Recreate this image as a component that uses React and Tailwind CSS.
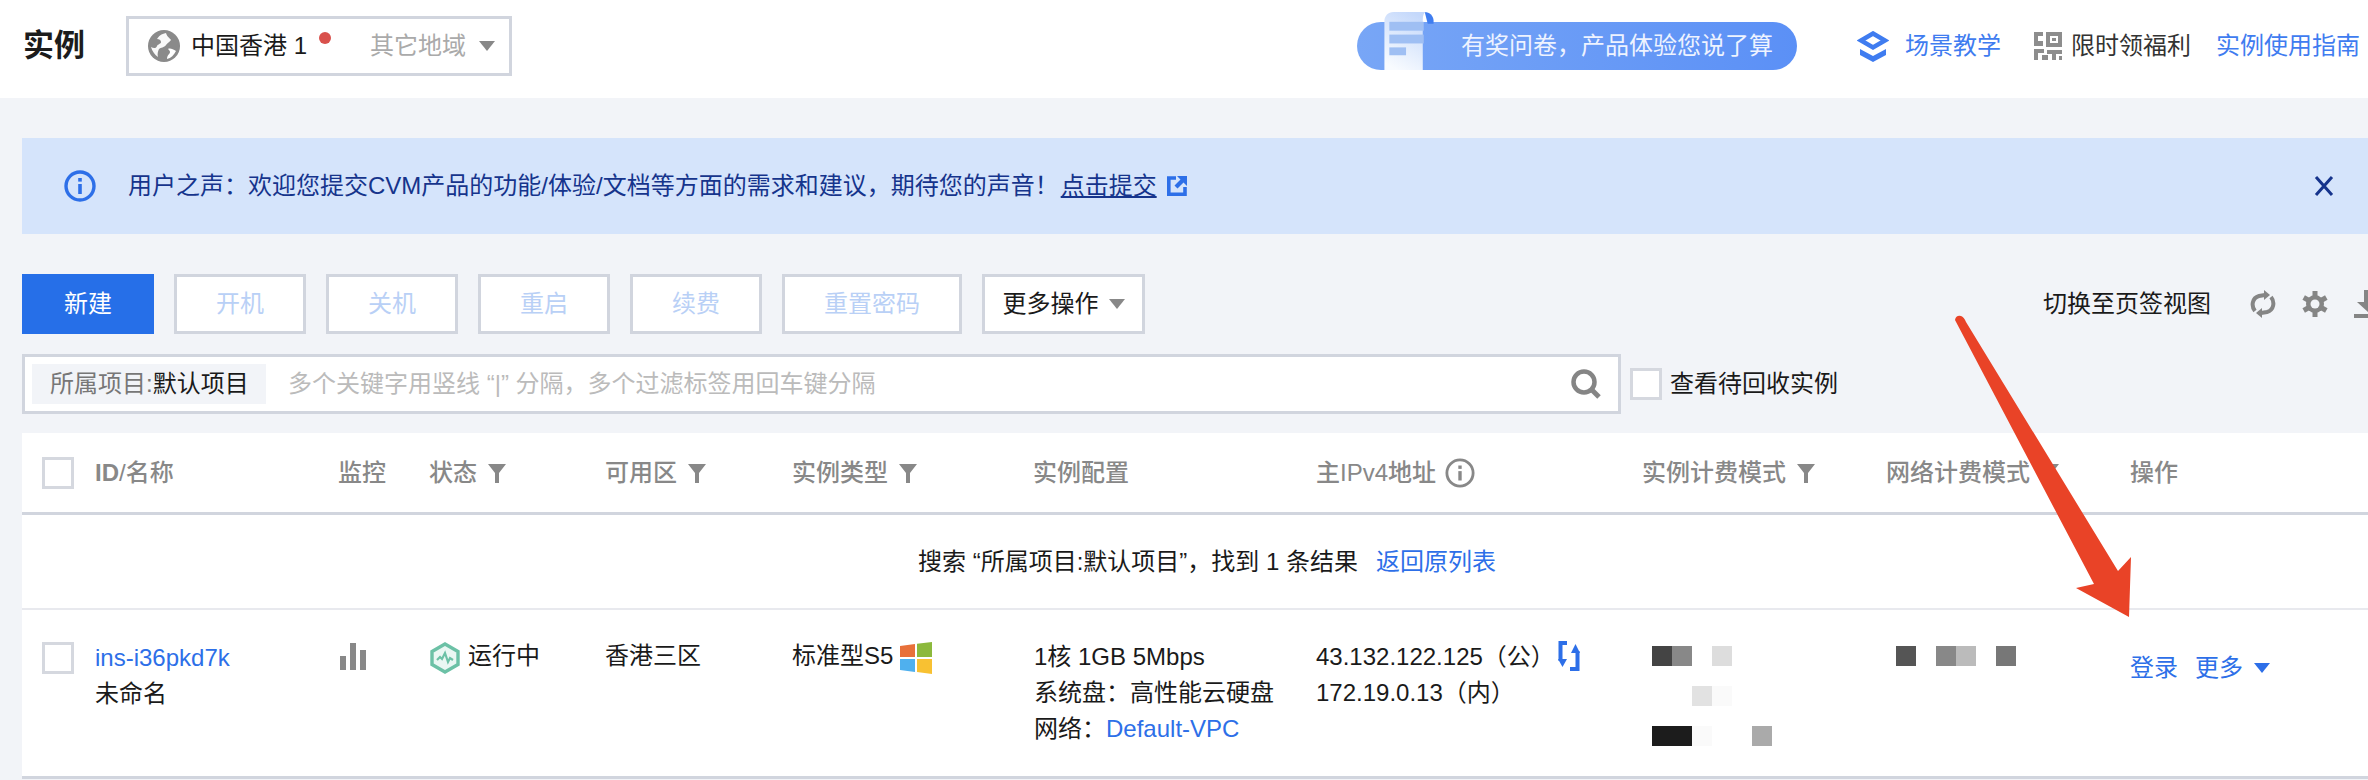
import React from "react";

const FONT = { fontFamily: '"Liberation Sans","Noto Sans CJK SC",sans-serif' };

function Funnel({ className = "" }) {
  return (
    <svg viewBox="0 0 20 24" className={`w-[20px] h-[24px] ${className}`}>
      <path d="M1 3h18l-7 9v10h-4V12z" fill="#888" />
    </svg>
  );
}

function Caret({ color = "#888", w = 16, h = 10, className = "" }) {
  return (
    <svg viewBox="0 0 16 10" width={w} height={h} className={className}>
      <path d="M0 0h16L8 10z" fill={color} />
    </svg>
  );
}

function Globe() {
  return (
    <svg viewBox="0 0 32 32" className="w-[32px] h-[32px] shrink-0">
      <circle cx="16" cy="16" r="16" fill="#8a8a8a" />
      <path d="M18 3c-5 1-7 3-9 6 2 0 4 1 4 3s-3 2-4 4c-1 3-4 2-6 1 1 4 4 8 7 10-1-3 0-6 1-8 2-2 5-1 7-4 1-2 4-3 5-5-1-2-4-3-5-7z" fill="#fff" opacity="0.95" />
      <path d="M20 19c2-1 5 0 8 2-2 4-5 7-9 8 0-4 3-5 3-7 0-1-1-2-2-3z" fill="#fff" />
    </svg>
  );
}

function Layers() {
  return (
    <svg viewBox="0 0 32 31" className="w-[32px] h-[31px] shrink-0">
      <path d="M16 2.500 28 9.500 16 16.500 4 9.500z" fill="none" stroke="#3f7cf0" strokeWidth="4.500" />
      <path d="M3 18l13 7 13-7v6l-13 7-13-7z" fill="#3f7cf0" />
    </svg>
  );
}

function Qr() {
  return (
    <svg viewBox="0 0 28 28" className="w-[28px] h-[28px] shrink-0" fill="#8d8d8d">
      <rect x="0" y="0" width="9" height="4" />
      <rect x="0" y="4" width="4" height="10" />
      <rect x="4" y="9" width="5" height="5" />
      <path d="M12 0h16v15H12zM16 4v7h8V4z" fillRule="evenodd" />
      <rect x="18" y="6" width="4" height="3" />
      <rect x="0" y="17" width="10" height="4" />
      <rect x="0" y="21" width="4" height="7" />
      <rect x="8" y="23" width="6" height="5" />
      <rect x="13" y="18" width="15" height="4" />
      <rect x="18" y="22" width="4" height="6" />
      <rect x="25" y="24" width="3" height="4" />
    </svg>
  );
}

function Notebook() {
  return (
    <svg viewBox="0 0 52 60" className="absolute left-[26px] top-[-11px] w-[52px] h-[59px]">
      <defs>
        <linearGradient id="docg" x1="0.7" y1="0" x2="0.3" y2="1">
          <stop offset="0" stopColor="#c4d8fb" />
          <stop offset="0.65" stopColor="#e6effd" />
          <stop offset="1" stopColor="#f8fbff" />
        </linearGradient>
      </defs>
      <path d="M42 1c5 0 9 4 9 9v3h-6z" fill="#3f7df0" />
      <path d="M10 1h33c-2 1-3 4-3 8v51H1V10c0-5 4-9 9-9z" fill="url(#docg)" />
      <rect x="6" y="11" width="35" height="9" fill="#9fbff3" />
      <rect x="6" y="24" width="35" height="9" fill="#9fbff3" />
      <rect x="6" y="37" width="17" height="8" fill="#9fbff3" />
    </svg>
  );
}

function InfoCircle({ color = "#2d6fe8", size = 32, sw = 3.4 }) {
  return (
    <svg viewBox="0 0 32 32" width={size} height={size} className="shrink-0">
      <circle cx="16" cy="16" r="14" fill="none" stroke={color} strokeWidth={sw} />
      <rect x="14.2" y="14" width="3.6" height="10" fill={color} />
      <rect x="14.2" y="8" width="3.6" height="3.6" fill={color} />
    </svg>
  );
}

function ExternalLink() {
  return (
    <svg viewBox="0 0 20 20" className="w-[20px] h-[20px] ml-[10px] shrink-0">
      <path d="M9 2H1.800v16.200H18V11" fill="none" stroke="#2d6fe8" strokeWidth="3.600" />
      <path d="M10 0h10v10l-3.500-3.500-6 6-3-3 6-6z" fill="#2d6fe8" />
    </svg>
  );
}

function Refresh() {
  return (
    <svg viewBox="0 0 26 30" className="w-[26px] h-[30px] shrink-0">
      <path d="M5 22C1 17 2 9 9 7l6-1" fill="none" stroke="#858585" strokeWidth="4" />
      <path d="M14 1l6 5-6 5z" fill="#858585" />
      <path d="M21 8c4 5 3 13-4 15l-6 1" fill="none" stroke="#858585" strokeWidth="4" />
      <path d="M12 29l-6-5 6-5z" fill="#858585" />
    </svg>
  );
}

function Gear() {
  return (
    <svg viewBox="0 0 28 28" className="w-[28px] h-[28px] shrink-0">
      <g stroke="#858585" strokeWidth="5">
        <path d="M14 1v26" />
        <path d="M2.700 7.500l22.600 13" />
        <path d="M25.300 7.500L2.700 20.500" />
      </g>
      <circle cx="14" cy="14" r="9" fill="#858585" />
      <circle cx="14" cy="14" r="4.500" fill="#f2f4f8" />
    </svg>
  );
}

function Download() {
  return (
    <svg viewBox="0 0 28 28" className="w-[28px] h-[28px] shrink-0">
      <path d="M10 0h8v12h7L14 22 3 12h7z" fill="#858585" />
      <rect x="0" y="24" width="28" height="4" fill="#858585" />
    </svg>
  );
}

function Bars() {
  return (
    <svg viewBox="0 0 27 27" className="w-[27px] h-[27px]">
      <rect x="0" y="13" width="6" height="14" fill="#888" />
      <rect x="10" y="0" width="6" height="27" fill="#888" />
      <rect x="20" y="7" width="6" height="20" fill="#888" />
    </svg>
  );
}

function StatusIcon() {
  return (
    <svg viewBox="0 0 32 32" className="w-[32px] h-[32px] shrink-0">
      <path d="M16 2 29 9.500v13L16 30 3 22.500v-13z" fill="#eaf7f3" stroke="#6cc1a6" strokeWidth="3.400" />
      <path d="M8 18l3-3 2 2 3-6 3 9 2-4 3 2" fill="none" stroke="#6cc1a6" strokeWidth="2.200" />
    </svg>
  );
}

function Windows() {
  return (
    <svg viewBox="0 0 32 32" className="w-[32px] h-[32px] shrink-0">
      <path d="M0 4l15-2v13H0z" fill="#e8703a" />
      <path d="M17 1.700 32 0v15H17z" fill="#8cb93c" />
      <path d="M0 17h15v13L0 28z" fill="#4fb0ee" />
      <path d="M17 17h15v15l-15-2z" fill="#f8c132" />
    </svg>
  );
}

function Swap() {
  return (
    <svg viewBox="0 0 22 30" className="w-[22px] h-[30px] shrink-0">
      <path d="M9 2H2.500v18" fill="none" stroke="#2d6fe8" strokeWidth="4" />
      <path d="M0 18h9l-4.500 8z" fill="#2d6fe8" />
      <path d="M12 28h7.500V10" fill="none" stroke="#2d6fe8" strokeWidth="4" />
      <path d="M13 12l4.500-9L22 12z" fill="#2d6fe8" />
    </svg>
  );
}

function Button({ children, className = "w-[132px]" }) {
  return (
    <div className={`h-[60px] bg-white border-[3px] border-[#d1d5de] flex items-center justify-center text-[24px] text-[#b9d0f6] ${className}`}>
      {children}
    </div>
  );
}

function Box({ className = "" }) {
  return <div className={`w-[32px] h-[32px] bg-white border-[3px] border-[#d5d8df] shrink-0 ${className}`} />;
}

function Mosaic({ rows }) {
  return (
    <div className="flex flex-col gap-[20px] pt-[36px] pl-[10px]">
      {rows.map((row, i) => (
        <div key={i} className="flex h-[20px]">
          {row.map((c, j) => (
            <div key={j} className={`w-[20px] h-[20px] ${c}`} />
          ))}
        </div>
      ))}
    </div>
  );
}

function Head({ width, children, funnel, info, className = "" }) {
  return (
    <div className={`${width} flex items-center shrink-0 text-[24px] font-medium text-[#888] ${className}`}>
      <span>{children}</span>
      {funnel && <Funnel className="ml-[10px]" />}
      {info && <span className="ml-[9px] flex"><InfoCircle color="#888" size={30} sw={3} /></span>}
    </div>
  );
}

export default function App() {
  return (
    <div className="relative w-[2368px] h-[780px] overflow-hidden bg-[#f2f4f8] text-[24px] text-[#1a1a1a] leading-[36px]" style={FONT}>
      {/* header */}
      <header className="h-[98px] bg-white flex items-center pl-[23px] pr-[8px] pb-[6px]">
        <h1 className="text-[31px] font-bold text-[#1c1c1c] w-[103px] leading-[40px]">实例</h1>
        <div className="w-[386px] h-[60px] border-[3px] border-[#d1d5de] bg-white flex items-center pl-[19px]">
          <Globe />
          <span className="ml-[11px] whitespace-nowrap">中国香港 1</span>
          <span className="w-[12px] h-[12px] rounded-full bg-[#d9514c] ml-[12px] mb-[16px] shrink-0" />
          <span className="ml-[39px] text-[#aaa] whitespace-nowrap">其它地域</span>
          <Caret className="ml-[13px]" />
        </div>
        <div className="ml-auto flex items-center">
          <div className="relative w-[440px] h-[48px] rounded-full bg-gradient-to-r from-[#78a6f6] to-[#5b90f6] flex items-center pl-[104px] text-[#eef3ff] whitespace-nowrap">
            <Notebook />
            有奖问卷，产品体验您说了算
          </div>
          <div className="ml-[60px] flex items-center text-[#3f7cf0]">
            <Layers />
            <span className="ml-[16px]">场景教学</span>
          </div>
          <div className="ml-[33px] flex items-center">
            <Qr />
            <span className="ml-[9px] text-[#333]">限时领福利</span>
          </div>
          <span className="ml-[25px] text-[#3f7cf0]">实例使用指南</span>
        </div>
      </header>

      <div className="pl-[22px]">
        {/* notice */}
        <div className="mt-[40px] h-[96px] bg-[#d5e4fb] flex items-center pl-[42px] pr-[34px] text-[#16348c]">
          <InfoCircle />
          <span className="ml-[32px] whitespace-nowrap">用户之声：欢迎您提交CVM产品的功能/体验/文档等方面的需求和建议，期待您的声音！</span>
          <span className="ml-[2px] underline whitespace-nowrap">点击提交</span>
          <ExternalLink />
          <svg viewBox="0 0 20 20" className="w-[20px] h-[20px] ml-auto">
            <path d="M2 1l16 18M18 1 2 19" stroke="#16348c" strokeWidth="3" fill="none" />
          </svg>
        </div>

        {/* toolbar */}
        <div className="mt-[40px] flex items-center">
          <div className="w-[132px] h-[60px] bg-[#266fe8] text-white flex items-center justify-center">新建</div>
          <div className="ml-[20px] flex gap-[20px]">
            <Button>开机</Button>
            <Button>关机</Button>
            <Button>重启</Button>
            <Button>续费</Button>
            <Button className="w-[180px]">重置密码</Button>
            <div className="w-[163px] h-[60px] bg-white border-[3px] border-[#d1d5de] flex items-center justify-center text-[#1a1a1a]">
              更多操作
              <Caret className="ml-[10px]" />
            </div>
          </div>
          <span className="ml-auto whitespace-nowrap">切换至页签视图</span>
          <div className="ml-[39px] flex items-center gap-[25px] w-[118px] shrink-0 overflow-hidden">
            <Refresh />
            <Gear />
            <Download />
          </div>
        </div>

        {/* search */}
        <div className="mt-[20px] flex items-center">
          <div className="w-[1599px] h-[60px] bg-white border-[3px] border-[#d1d5de] flex items-center pl-[7px] pr-[17px]">
            <div className="h-[40px] w-[234px] bg-[#f2f4f8] flex items-center pl-[18px] text-[#777] whitespace-nowrap">
              所属项目:<span className="text-[#1a1a1a]">默认项目</span>
            </div>
            <span className="ml-[22px] text-[#bbb] whitespace-nowrap">多个关键字用竖线 “|” 分隔，多个过滤标签用回车键分隔</span>
            <svg viewBox="0 0 30 30" className="w-[30px] h-[30px] ml-auto">
              <circle cx="13" cy="13" r="10.500" fill="none" stroke="#858585" strokeWidth="4.500" />
              <path d="M20 20l8 8" stroke="#858585" strokeWidth="5" />
            </svg>
          </div>
          <Box className="ml-[9px]" />
          <span className="ml-[8px] whitespace-nowrap">查看待回收实例</span>
        </div>

        {/* table */}
        <div className="mt-[19px] bg-white">
          <div className="h-[82px] border-b-[3px] border-[#d1d5de] flex items-center pl-[20px]">
            <Box className="mr-[21px]" />
            <Head width="w-[243px]"><b className="font-bold">ID</b>/名称</Head>
            <Head width="w-[91px]">监控</Head>
            <Head width="w-[176px]" funnel>状态</Head>
            <Head width="w-[187px]" funnel>可用区</Head>
            <Head width="w-[241px]" funnel>实例类型</Head>
            <Head width="w-[283px]">实例配置</Head>
            <Head width="w-[326px]" info>主IPv4地址</Head>
            <Head width="w-[244px]" funnel>实例计费模式</Head>
            <Head width="w-[244px]" funnel>网络计费模式</Head>
            <Head width="w-[100px]">操作</Head>
          </div>

          <div className="h-[95px] border-b-[2px] border-[#e8e9ee] flex items-center pl-[896px] whitespace-nowrap">
            <span>搜索 “所属项目:默认项目”，找到 1 条结果</span>
            <span className="ml-[18px] text-[#2d6fe8]">返回原列表</span>
          </div>

          <div className="h-[169px] border-b-[3px] border-[#d1d5de] flex items-start pl-[20px]">
            <div className="pt-[32px] mr-[21px]"><Box /></div>
            <div className="w-[243px] pt-[30px] shrink-0">
              <div className="text-[#2d6fe8]">ins-i36pkd7k</div>
              <div>未命名</div>
            </div>
            <div className="w-[91px] pt-[33px] pl-[2px] shrink-0"><Bars /></div>
            <div className="w-[176px] pt-[29px] shrink-0 flex items-start">
              <span className="pt-[3px] flex"><StatusIcon /></span>
              <span className="ml-[7px] mt-[-1px]">运行中</span>
            </div>
            <div className="w-[187px] pt-[28px] shrink-0">香港三区</div>
            <div className="w-[241px] pt-[28px] shrink-0 flex items-start">
              <span>标准型S5</span>
              <span className="ml-[7px] pt-[4px] flex"><Windows /></span>
            </div>
            <div className="w-[283px] pt-[29px] pl-[1px] shrink-0 whitespace-nowrap">
              <div>1核 1GB 5Mbps</div>
              <div>系统盘：高性能云硬盘</div>
              <div>网络：<span className="text-[#2d6fe8]">Default-VPC</span></div>
            </div>
            <div className="w-[326px] pt-[29px] shrink-0 whitespace-nowrap">
              <div className="flex items-start">
                <span>43.132.122.125（公）</span>
                <span className="ml-[3px] pt-[2px] flex"><Swap /></span>
              </div>
              <div>172.19.0.13（内）</div>
            </div>
            <div className="w-[244px] shrink-0">
              <Mosaic
                rows={[
                  ["bg-[#444]", "bg-[#888]", "bg-white", "bg-[#ddd]"],
                  ["bg-white", "bg-white", "bg-[#e2e2e2]", "bg-[#fafafa]"],
                  ["bg-[#1c1c1c]", "bg-[#1c1c1c]", "bg-[#fafafa]", "bg-white", "bg-white", "bg-[#aaa]"],
                ]}
              />
            </div>
            <div className="w-[244px] shrink-0">
              <Mosaic rows={[["bg-[#555]", "bg-white", "bg-[#888]", "bg-[#bbb]", "bg-white", "bg-[#777]"]]} />
            </div>
            <div className="pt-[40px] flex items-center shrink-0 text-[#2d6fe8] whitespace-nowrap">
              <span>登录</span>
              <span className="ml-[17px]">更多</span>
              <Caret color="#2d6fe8" className="ml-[11px]" />
            </div>
          </div>
        </div>
      </div>

      {/* annotation arrow */}
      <svg viewBox="0 0 2368 780" className="absolute inset-0 w-[2368px] h-[780px] pointer-events-none">
        <path d="M1955 320Q1956 315 1961 316 1964 317 1966 322L2118 571 2131 557 2129 617 2076 588 2094 584Z" fill="#e94327" />
      </svg>
    </div>
  );
}
